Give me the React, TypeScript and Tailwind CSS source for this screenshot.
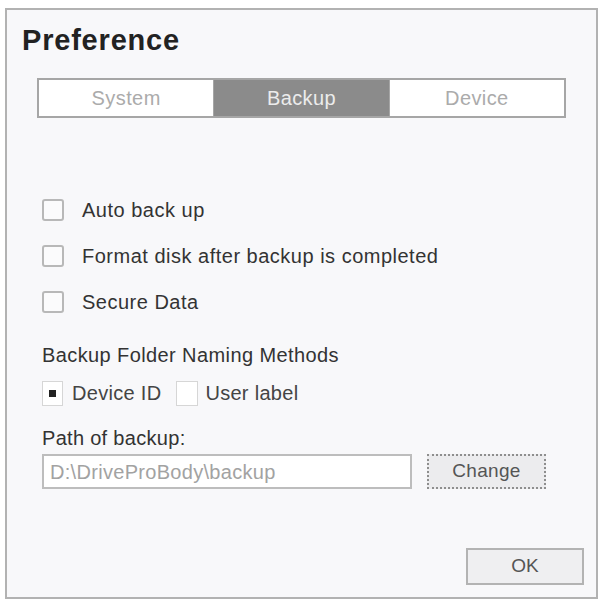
import React, { useState } from 'react';

const font = { fontFamily: '"Liberation Sans", Arial, sans-serif' };

type Tab = 'System' | 'Backup' | 'Device';

function CheckRow({ label }: { label: string }) {
  return (
    <label className="flex h-[46px] items-center gap-[18px]">
      <span className="h-[22px] w-[22px] rounded-[3px] border-2 border-[#b8b8b8] bg-[#fbfbfc]" />
      <span className="text-[20px] tracking-[0.5px] text-[#333]">{label}</span>
    </label>
  );
}

export default function App() {
  const [tab, setTab] = useState<Tab>('Backup');
  const [naming, setNaming] = useState<'device' | 'user'>('device');
  const tabs: Tab[] = ['System', 'Backup', 'Device'];

  return (
    <div className="h-[601px] w-[601px] bg-white pl-[5px] pt-[8px]" style={font}>
      <div className="flex h-[591px] w-[593px] flex-col border-2 border-[#b2b2b2] bg-[#f8f8fa] pt-[14px]">
        {/* Title */}
        <h1 className="pl-[15px] text-[29px] font-bold leading-[32px] tracking-[0.8px] text-[#222]">
          Preference
        </h1>

        {/* Tabs */}
        <div className="ml-[30px] mt-[22px] flex h-[40px] w-[529px] border-2 border-[#a6a6a6] bg-white">
          {tabs.map((t, i) => (
            <button
              key={t}
              onClick={() => setTab(t)}
              className={
                'flex flex-1 items-center justify-center text-[20px] tracking-[0.4px] ' +
                (tab === t ? 'bg-[#8b8b8b] text-[#ececec] ' : 'bg-white text-[#ababab] ') +
                (i > 0 ? 'border-l border-[#a6a6a6]' : '')
              }
            >
              {t}
            </button>
          ))}
        </div>

        {/* Options */}
        <div className="mt-[69px] flex flex-col pl-[35px]">
          <CheckRow label="Auto back up" />
          <CheckRow label="Format disk after backup is completed" />
          <CheckRow label="Secure Data" />

          <div className="mt-[18px] text-[20px] leading-[24px] tracking-[0.4px] text-[#333]">
            Backup Folder Naming Methods
          </div>

          <div className="mt-[12px] flex h-[28px] items-center text-[20px] tracking-[0.3px] text-[#444]">
            <button
              onClick={() => setNaming('device')}
              className="flex h-[25px] w-[21px] items-center justify-center border border-[#d6d6d6] bg-white"
            >
              {naming === 'device' && <span className="h-[7px] w-[7px] bg-[#222]" />}
            </button>
            <span className="ml-[9px]">Device ID</span>
            <button
              onClick={() => setNaming('user')}
              className="ml-[15px] flex h-[25px] w-[22px] items-center justify-center border border-[#d6d6d6] bg-white"
            >
              {naming === 'user' && <span className="h-[7px] w-[7px] bg-[#222]" />}
            </button>
            <span className="ml-[7px]">User label</span>
          </div>

          <div className="mt-[19px] text-[20px] leading-[24px] tracking-[0.3px] text-[#333]">
            Path of backup:
          </div>

          <div className="mt-[4px] flex items-center">
            <div className="flex h-[35px] w-[370px] items-center border-2 border-[#bdbdbd] bg-white px-[6px] text-[20px] tracking-[0.3px] text-[#a2a2a2]">
              D:\DriveProBody\backup
            </div>
            <button className="ml-[15px] h-[35px] w-[119px] border-2 border-dotted border-[#8e8e8e] bg-[#ececee] text-[19px] tracking-[0.3px] text-[#555]">
              Change
            </button>
          </div>
        </div>

        {/* Footer */}
        <div className="mt-auto flex justify-end pb-[12px] pr-[12px]">
          <button className="h-[37px] w-[118px] border-2 border-[#b3b3b3] bg-[#efeff1] text-[19px] text-[#555]">
            OK
          </button>
        </div>
      </div>
    </div>
  );
}
